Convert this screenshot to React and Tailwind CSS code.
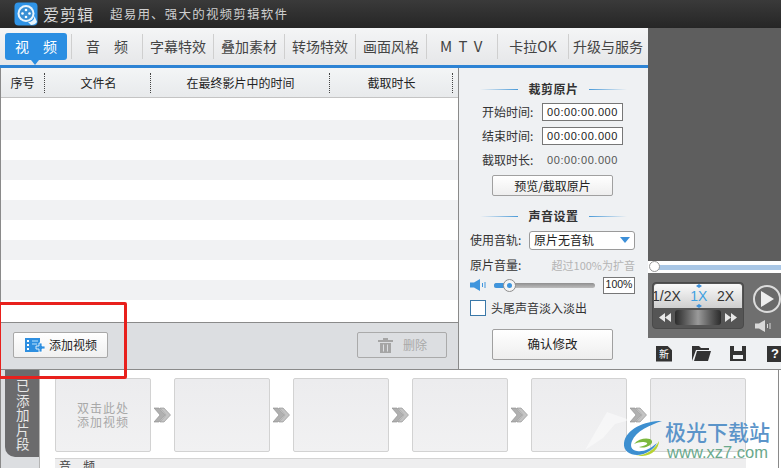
const cjk = { fontFamily: '"Noto Sans CJK SC","Liberation Sans",sans-serif' };
const latin = { fontFamily: '"Liberation Sans",sans-serif' };

function Logo() {
  return (
    <svg width="24" height="24" viewBox="0 0 24 24">
      <rect x="0.5" y="0.5" width="23" height="23" rx="4" fill="#2f93e6" />
      <circle cx="12" cy="11.5" r="8.5" fill="#e8f4fc" />
      <circle cx="12" cy="11.5" r="6.5" fill="#3a8fd4" />
      <circle cx="12" cy="8" r="1.3" fill="#fff" />
      <circle cx="12" cy="15" r="1.3" fill="#fff" />
      <circle cx="8.5" cy="11.5" r="1.3" fill="#fff" />
      <circle cx="15.5" cy="11.5" r="1.3" fill="#fff" />
      <path d="M14 20 Q20 20 20.5 14 L23 20 Q21 23 17 23Z" fill="#e8f4fc" />
    </svg>
  );
}

function Heading({ children }) {
  return (
    <div className="flex items-center justify-center gap-[10px] h-[16px]">
      <div className="w-[38px] h-px bg-gradient-to-r from-transparent to-[#4a9ad8]" />
      <span className="text-[12px] font-bold text-[#333] tracking-[0.5px]">{children}</span>
      <div className="w-[38px] h-px bg-gradient-to-l from-transparent to-[#4a9ad8]" />
    </div>
  );
}

function TimeRow({ label, boxed }) {
  return (
    <div className="flex items-center h-[24px] pl-[23px] text-[12px] text-[#333]">
      <span className="w-[60px]">{label}</span>
      {boxed ? (
        <div className="w-[81px] h-[18px] border border-[#777] bg-white text-[11px] text-[#222] flex items-center justify-center tracking-[0.55px]" style={latin}>
          00:00:00.000
        </div>
      ) : (
        <div className="w-[81px] text-[11px] text-[#555] flex items-center justify-center tracking-[0.55px]" style={latin}>
          00:00:00.000
        </div>
      )}
    </div>
  );
}

function Speaker({ color, w = 18 }) {
  return (
    <svg width={w} height="12" viewBox="0 0 18 12" className="shrink-0">
      <path d="M0 3.5H4L10 0V12L4 8.5H0Z" fill={color} />
      <path d="M12.5 4V8M15 3V9" stroke={color} strokeWidth="1" />
    </svg>
  );
}

function Chevrons() {
  return (
    <svg width="17" height="16" viewBox="0 0 17 16" className="shrink-0">
      <path d="M0 1H5L11 8L5 15H0L6 8Z" fill="#b0b0b0" stroke="#8a8a8a" strokeWidth="0.6" />
      <path d="M6 1H10L16.5 8L10 15H6L12 8Z" fill="#c4c4c4" stroke="#8a8a8a" strokeWidth="0.6" />
    </svg>
  );
}

function Slot({ children }) {
  return (
    <div className="w-[96px] h-[74px] shrink-0 rounded-[2px] border border-[#d2d2d2] bg-gradient-to-b from-[#ececee] to-[#f1f1f2] flex items-center justify-center text-center text-[12px] leading-[14px] text-[#a8a8a8] tracking-[1px]">
      {children}
    </div>
  );
}

export default function App() {
  const tabs = ['音　频', '字幕特效', '叠加素材', '转场特效', '画面风格', 'M T V', '卡拉OK'];
  const rows = [0, 1, 0, 1, 0, 1, 0, 1, 0, 1];
  return (
    <div className="relative w-[781px] h-[468px] overflow-hidden bg-[#5e5e5e] flex flex-col" style={cjk}>
      {/* title bar */}
      <div className="h-[28px] shrink-0 bg-gradient-to-b from-[#3a3a3a] to-[#262626] flex items-center pl-[14px]">
        <Logo />
        <span className="ml-[5px] text-[16px] tracking-[1px] text-[#d8d8d8]">爱剪辑</span>
        <span className="ml-[16px] text-[12.5px] tracking-[1.2px] text-[#cfcfcf]">超易用、强大的视频剪辑软件</span>
      </div>

      {/* main */}
      <div className="flex h-[341px] shrink-0">
        {/* editor */}
        <div className="w-[648px] shrink-0 flex flex-col bg-[#eff1f3]">
          <div className="h-[37px] shrink-0 flex items-center pl-px bg-gradient-to-b from-[#f4f5f6] to-[#e6e7e9]">
            <div className="w-[71px] h-[37px] flex items-center pl-[4px] relative shrink-0">
              <div className="relative w-[62px] h-[27px] rounded-[3px] bg-[#2a8ee2] text-white text-[14px] flex items-center justify-center">
                视　频
                <div className="absolute left-[26px] top-[27px] w-[8px] h-[5px] bg-[#2a8ee2] [clip-path:polygon(0_0,100%_0,50%_100%)]" />
              </div>
              <div className="absolute right-0 top-[6px] h-[25px] w-px bg-[#cfcfcf]" />
            </div>
            {tabs.map((t) => (
              <div
                key={t}
                className={`w-[71px] h-[25px] shrink-0 flex items-center justify-center text-[#444] whitespace-nowrap text-[14px] border-r border-[#cfcfcf] ${t === 'M T V' ? 'tracking-[1.5px] text-[15px]' : ''}`}
              >
                {t}
              </div>
            ))}
            <div className="w-[79px] h-[25px] shrink-0 flex items-center pl-[4px] text-[#444] whitespace-nowrap text-[14px]">升级与服务</div>
          </div>
          <div className="h-[3px] shrink-0 bg-[#2d83d4]" />
          <div className="flex flex-1 min-h-0">
            {/* list */}
            <div className="w-[459px] shrink-0 flex flex-col border-l border-[#8a8a8a] border-r">
              <div className="h-[30px] shrink-0 flex items-center pt-px bg-gradient-to-b from-[#f3f5f6] to-[#e8eaec] border-b border-[#c4c4c4] text-[12px] text-[#222]">
                <div className="w-[44px] h-[20px] flex items-center justify-center border-r border-dotted border-[#444]">序号</div>
                <div className="w-[106px] h-[20px] flex items-center justify-center pl-[2px] border-r border-dotted border-[#444]">文件名</div>
                <div className="w-[179px] h-[20px] flex items-center justify-center pl-[1px] border-r border-dotted border-[#444]">在最终影片中的时间</div>
                <div className="w-[123px] h-[20px] flex items-center justify-center pl-[1px] border-r border-dotted border-[#444]">截取时长</div>
              </div>
              <div className="flex-1 min-h-0 flex flex-col bg-white">
                <div className="h-[22px] shrink-0" />
                {rows.map((r, i) => (
                  <div key={i} className={`h-[20px] shrink-0 ${r === 0 ? 'bg-[#f1f2f3]' : 'bg-white'}`} />
                ))}
              </div>
              <div className="h-[47px] shrink-0 bg-[#dcdee1] border-t border-[#8a8a8a] flex items-start justify-between pt-[9px] pl-[12px] pr-[11px]">
                <div className="w-[95px] h-[26px] rounded-[2px] border border-[#a8a8a8] bg-gradient-to-b from-white to-[#f0f0f0] flex items-center pl-[11px] gap-[4px] text-[12px] text-[#222]">
                  <svg width="20" height="15" viewBox="0 0 20 15">
                    <rect x="0" y="0" width="15" height="14" fill="#2e8fe0" />
                    <path d="M2 2h2v2H2zM2 6h2v2H2zM2 10h2v2H2z" fill="#fff" />
                    <path d="M7 3h6M7 6h5" stroke="#8cc7f4" strokeWidth="1.5" />
                    <path d="M14 5h3v3h3v3h-3v3h-3v-3h-3V8h3z" fill="#2e8fe0" stroke="#fff" strokeWidth="0.8" />
                  </svg>
                  添加视频
                </div>
                <div className="w-[90px] h-[26px] rounded-[2px] border border-[#aaa] flex items-center justify-center gap-[9px] text-[12px] text-[#a9a9a9]">
                  <svg width="17" height="16" viewBox="0 0 17 16">
                    <path d="M1 3H6V1H11V3H16V5H1Z" fill="#a5a5a5" />
                    <path d="M3 6H14V16H3Z" fill="#a5a5a5" />
                    <path d="M6.5 7.5V14.5M10.5 7.5V14.5" stroke="#dcdee1" strokeWidth="1" />
                  </svg>
                  删除
                </div>
              </div>
            </div>

            {/* side settings */}
            <div className="flex-1 min-w-0 flex flex-col pt-[13px] bg-[#eff1f3] text-[#333]">
              <Heading>裁剪原片</Heading>
              <div className="mt-[3px]">
                <TimeRow label="开始时间:" boxed />
                <TimeRow label="结束时间:" boxed />
                <TimeRow label="截取时长:" />
              </div>
              <div className="ml-[33px] mt-[3px] w-[121px] h-[21px] rounded-[2px] border border-[#a0a0a0] bg-gradient-to-b from-white to-[#eeeeee] flex items-center justify-center text-[12px] text-[#222]">
                预览/截取原片
              </div>
              <div className="mt-[12px]"><Heading>声音设置</Heading></div>
              <div className="flex items-center mt-[6px] pl-[11px] h-[20px] text-[12px]">
                <span className="w-[59px]">使用音轨:</span>
                <div className="w-[106px] h-[19px] rounded-[3px] border border-[#9a9a9a] bg-white flex items-center justify-between pl-[4px] pr-[4px] text-[12px] text-[#222]">
                  原片无音轨
                  <div className="w-[10px] h-[6px] bg-[#3d8fd8] [clip-path:polygon(0_0,100%_0,50%_100%)]" />
                </div>
              </div>
              <div className="flex items-center justify-between mt-[6px] pl-[11px] pr-[13px] h-[18px] text-[12px]">
                <span>原片音量:</span>
                <span className="text-[#b4b4b4] text-[11px]">超过100%为扩音</span>
              </div>
              <div className="flex items-center mt-[2px] pl-[11px] h-[18px]">
                <Speaker color="#3f95dd" />
                <div className="relative ml-[6px] w-[101px] h-[5px] rounded-full bg-gradient-to-b from-[#8f8f8f] to-[#bdbdbd]">
                  <div className="absolute left-0 top-0 w-[14px] h-[5px] rounded-full bg-[#3f95dd]" />
                  <div className="absolute left-[9px] top-[-4px] w-[13px] h-[13px] rounded-full border border-[#8d8d8d] bg-[#f5f5f5] flex items-center justify-center">
                    <div className="w-[5px] h-[5px] rounded-full bg-[#3f95dd]" />
                  </div>
                </div>
                <div className="ml-[8px] w-[32px] h-[17px] border border-[#777] bg-white flex items-center justify-center text-[10.5px] text-[#222]" style={latin}>100%</div>
              </div>
              <div className="flex items-center mt-[5px] pl-[11px] h-[18px] text-[12px] text-[#333]">
                <div className="w-[16px] h-[16px] border border-[#3a78a8] bg-white mr-[5px]" />
                头尾声音淡入淡出
              </div>
              <div className="ml-[33px] mt-[12px] w-[121px] h-[31px] rounded-[2px] border border-[#a0a0a0] bg-gradient-to-b from-white to-[#eeeeee] flex items-center justify-center text-[12.5px] text-[#222]">
                确认修改
              </div>
            </div>
          </div>
        </div>

        {/* player */}
        <div className="flex-1 min-w-0 flex flex-col">
          <div className="h-[233px] shrink-0" />
          <div className="h-[12px] shrink-0 bg-white flex items-center relative pl-[8px]">
            <div className="w-full h-[5px] bg-[#a9c7e6]" />
            <div className="absolute left-[1px] top-0 w-[11px] h-[11px] rounded-full border border-[#999] bg-white" />
          </div>
          <div className="flex-1 min-h-0 bg-[#6f6f6f] flex pl-[4px] pt-[9px] gap-[9px]">
            <div className="w-[92px] h-[47px] shrink-0 rounded-[4px] bg-[#555] border border-[#4a4a4a] p-px flex flex-col">
              <div className="relative h-[24px] rounded-t-[3px] bg-gradient-to-b from-[#fafafa] to-[#cfcfcf] flex items-center gap-[9.5px] text-[14px] text-[#333] overflow-hidden whitespace-nowrap" style={latin}>
                <span className="-ml-[2px]">1/2X</span>
                <span className="text-[#3fa0e0]">1X</span>
                <span>2X</span>
                <div className="absolute left-[42px] top-0 w-[6px] h-[4px] bg-[#3d8fd8] [clip-path:polygon(50%_0,100%_50%,50%_100%,0_50%)]" />
                <div className="absolute left-[42px] bottom-0 w-[6px] h-[4px] bg-[#3d8fd8] [clip-path:polygon(50%_0,100%_50%,50%_100%,0_50%)]" />
              </div>
              <div className="flex-1 flex items-center justify-between px-[5px]">
                <svg width="12" height="9" viewBox="0 0 12 9"><path d="M6 0V9L0 4.500ZM12 0V9L6 4.500Z" fill="#e8e8e8" /></svg>
                <div className="w-[46px] h-[15px] rounded-[3px] bg-gradient-to-r from-[#2c2c2c] via-[#9a9a9a] to-[#2c2c2c]" />
                <svg width="12" height="9" viewBox="0 0 12 9"><path d="M0 0V9L6 4.500ZM6 0V9L12 4.500Z" fill="#e8e8e8" /></svg>
              </div>
            </div>
            <div className="flex flex-col items-start shrink-0 pt-[3px]">
              <div className="w-[28px] h-[28px] rounded-full border-[2px] border-[#dcdcdc] flex items-center justify-center bg-[#6a6a6a]">
                <svg width="13" height="16" viewBox="0 0 13 16"><path d="M0 0L13 8L0 16Z" fill="#eee" /></svg>
              </div>
              <div className="mt-[7px] ml-[2px]"><Speaker color="#d9d9d9" w={18} /></div>
            </div>
          </div>
          <div className="h-[31px] shrink-0 bg-[#eff1f3] flex items-center pl-[8px]">
            <div className="w-[16px] h-[16px] bg-[#333] text-white text-[10px] leading-[16px] text-center shrink-0 [clip-path:polygon(0_0,70%_0,100%_30%,100%_100%,0_100%)]">新</div>
            <svg width="19" height="15" viewBox="0 0 19 15" className="shrink-0 ml-[20px]"><path d="M0 15V0H7L9 2H17V4H4L0 15ZM2 15L5 5H19L16 15Z" fill="#333" /></svg>
            <svg width="16" height="15" viewBox="0 0 16 15" className="shrink-0 ml-[19px]"><path d="M0 0H16V15H0ZM4 0V5H12V0ZM3 9V13H13V9Z" fill="#333" fillRule="evenodd" /></svg>
            <div className="w-[16px] h-[16px] bg-[#333] text-white text-[13px] font-bold leading-[16px] text-center shrink-0 ml-[21px]" style={latin}>?</div>
          </div>
        </div>
      </div>

      {/* timeline */}
      <div className="flex-1 min-h-0 bg-white flex relative border-t border-[#8a8a8a]">
        <div className="w-[40px] shrink-0 bg-[#dcdee1] border-l border-[#8a8a8a] border-r border-r-[#b5b5b5] relative overflow-hidden">
          <div className="absolute left-[4px] top-0 w-[35px] h-[87px] rounded-bl-[10px] bg-[#6b6b6d] overflow-hidden">
            <div className="absolute left-[11px] top-[8px] w-[14px] text-[#e8e8e8] text-[13.5px] leading-[14.5px] break-all">已添加片段</div>
          </div>
        </div>
        <div className="flex-1 min-w-0 pl-[15px] pt-[8px] flex flex-col">
          <div className="flex items-center gap-[3px]">
            <Slot><span>双击此处<br />添加视频</span></Slot>
            <Chevrons /><Slot /><Chevrons /><Slot /><Chevrons /><Slot /><Chevrons /><Slot /><Chevrons /><Slot />
          </div>
          <div className="mt-[6px] w-[691px] h-[14px] bg-[#eeeeef] border-t border-[#d4d4d4] text-[12px] leading-[14px] text-[#444] pl-[4px] whitespace-nowrap overflow-hidden">音　频</div>
        </div>
        <div className="w-px shrink-0 mr-[2px] bg-[#8a8a8a]" />
      </div>

      {/* watermark */}
      <svg width="60" height="44" viewBox="0 0 60 44" className="absolute left-[585px] top-[412px] pointer-events-none">
        <path d="M0 38L22 0L45 8L30 12L18 26Z" fill="#ffffff" opacity="0.45" />
      </svg>
      <div className="absolute left-[622px] top-[418px] flex items-center pointer-events-none">
        <svg width="42" height="40" viewBox="0 0 42 40">
          <path d="M40 2C22 2 4 10 2 24C1 32 8 36 15 36C24 36 32 30 35 24C28 30 22 33 15 32C9 31 8 27 10 22C14 12 28 6 40 2Z" fill="#3d8fd0" />
          <path d="M12 25C17 19 28 18 30 22C31 26 23 30 17 28C23 27 26 25 25 24C22 22 16 23 12 25Z" fill="#7cb83e" />
          <path d="M14 36C22 37 32 32 37 22C37 30 28 40 14 36Z" fill="#b7d232" />
        </svg>
        <div className="ml-[1px] flex flex-col items-center">
          <span className="text-[21px] leading-[26px] font-medium text-[#5b94c9] whitespace-nowrap">极光下载站</span>
          <span className="text-[16.5px] leading-[16px] text-[#6aa98c] whitespace-nowrap" style={latin}>www.xz7.com</span>
        </div>
      </div>

      {/* red annotation */}
      <div className="absolute left-[-2px] top-[302px] w-[129px] h-[77px] border-[3px] border-[#e8201c] rounded-[2px] pointer-events-none" />
    </div>
  );
}
